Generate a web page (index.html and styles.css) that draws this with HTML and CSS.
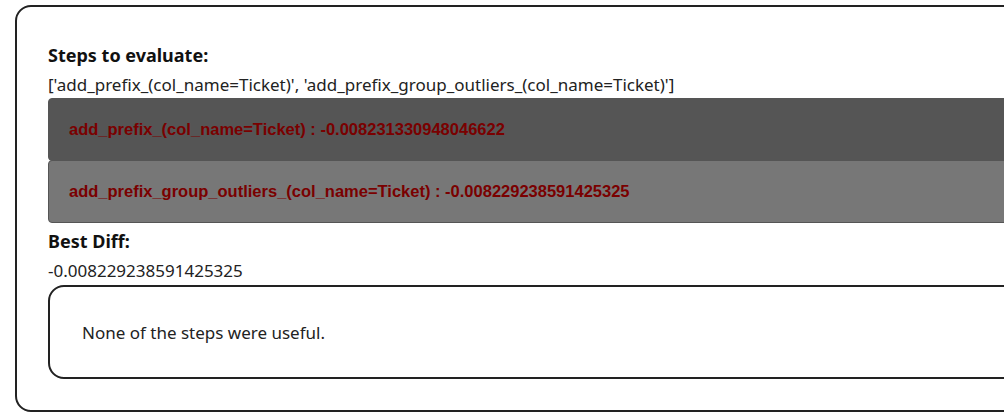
FILE: index.html
```html
<!DOCTYPE html>
<html>
<head>
<meta charset="utf-8">
<link rel="stylesheet" href="styles.css">
</head>
<body>
<div class="panel">
  <h3 class="label">Steps to evaluate:</h3>
  <div class="value">['add_prefix_(col_name=Ticket)', 'add_prefix_group_outliers_(col_name=Ticket)']</div>
  <div class="steps">
    <div class="step step-dark">add_prefix_(col_name=Ticket) : -0.008231330948046622</div>
    <div class="step step-light">add_prefix_group_outliers_(col_name=Ticket) : -0.008229238591425325</div>
  </div>
  <h3 class="label label-best">Best Diff:</h3>
  <div class="value">-0.008229238591425325</div>
  <div class="note">None of the steps were useful.</div>
</div>
</body>
</html>
```
FILE: styles.css
```css
html, body {
  margin: 0;
  padding: 0;
  overflow: hidden;
  background: #fff;
}
body {
  padding: 5px 0 0 15px;
  font-family: "Noto Sans", "Open Sans", sans-serif;
  color: #222;
}
.panel {
  width: 1100px;
  border: 2px solid #222;
  border-radius: 16px;
  padding: 36px 31px 31px 31px;
  box-sizing: border-box;
}
.label {
  margin: 0;
  font-size: 18px;
  line-height: 24px;
  font-weight: 700;
  color: #111;
}
.label-best {
  margin-top: 6px;
}
.value {
  margin-top: 7px;
  font-size: 17px;
  line-height: 22px;
  color: #222;
}
.steps {
  margin-top: 2px;
  display: flex;
  flex-direction: column;
}
.step {
  height: 63px;
  box-sizing: border-box;
  border: 1px solid #555;
  border-radius: 4px;
  padding: 0 20px;
  display: flex;
  align-items: center;
  font-family: "Liberation Sans", Arial, sans-serif;
  font-weight: 700;
  font-size: 16.5px;
  color: #7a0000;
}
.step-dark {
  background: #555;
}
.step-light {
  background: #777;
  border-color: #555;
  margin-top: -1px;
}
.note {
  margin-top: 3px;
  height: 94px;
  box-sizing: border-box;
  border: 2px solid #222;
  border-radius: 16px;
  padding: 0 32px;
  display: flex;
  align-items: center;
  font-size: 17px;
  color: #222;
}
```
